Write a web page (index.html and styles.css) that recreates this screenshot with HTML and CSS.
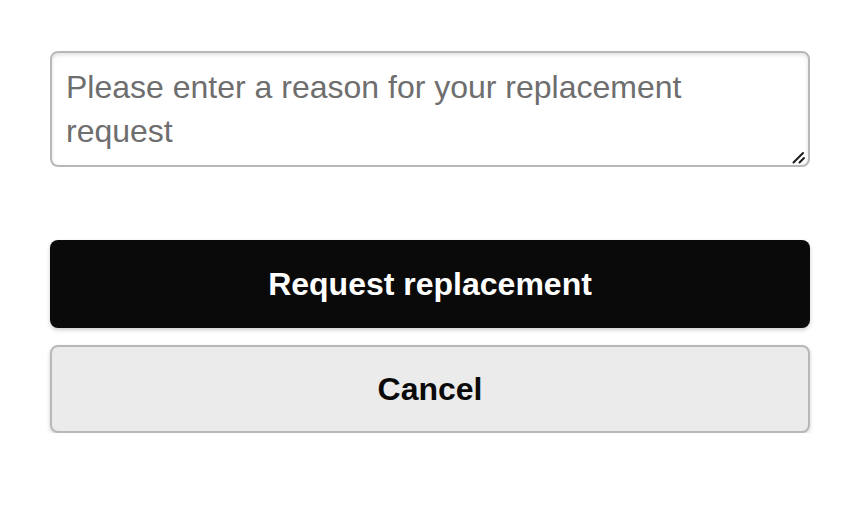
FILE: index.html
```html
<!DOCTYPE html>
<html>
<head>
<meta charset="utf-8">
<link rel="stylesheet" href="styles.css">
</head>
<body>
<div class="form">
  <div class="field">
    <textarea class="reason" placeholder="Please enter a reason for your replacement request"></textarea>
    <svg class="grip" width="16" height="14" viewBox="0 0 16 14" aria-hidden="true">
      <path d="M2.5 12.5 L12 3" stroke="#1a1a1a" stroke-width="2" stroke-linecap="round"/>
      <path d="M8.5 12.5 L13 8" stroke="#1a1a1a" stroke-width="2" stroke-linecap="round"/>
    </svg>
  </div>
  <div class="actions">
    <button class="btn btn-primary">Request replacement</button>
    <button class="btn btn-secondary">Cancel</button>
  </div>
</div>
</body>
</html>
```
FILE: styles.css
```css
html, body {
  margin: 0;
  padding: 0;
  background: #ffffff;
}
body {
  font-family: "Liberation Sans", Arial, sans-serif;
}
.form {
  padding: 51px 52px 0 50px;
  display: flex;
  flex-direction: column;
}
.field {
  position: relative;
  width: 760px;
  height: 116px;
}
.reason {
  display: block;
  box-sizing: border-box;
  width: 760px;
  height: 116px;
  margin: 0;
  padding: 12px 14px;
  border: 2px solid #b8b8b8;
  border-radius: 8px;
  box-shadow: inset 0 2px 4px rgba(0,0,0,0.12);
  font-family: "Liberation Sans", Arial, sans-serif;
  font-size: 32px;
  line-height: 44px;
  color: #333;
  resize: none;
  outline: none;
}
.reason::placeholder {
  color: #6e6e6e;
  opacity: 1;
}
.grip {
  position: absolute;
  right: 3px;
  bottom: 3px;
  pointer-events: none;
}
.actions {
  margin-top: 73px;
  display: flex;
  flex-direction: column;
  gap: 17px;
}
.btn {
  box-sizing: border-box;
  width: 760px;
  height: 88px;
  margin: 0;
  border-radius: 8px;
  font-family: "Liberation Sans", Arial, sans-serif;
  font-weight: bold;
  font-size: 32px;
  cursor: pointer;
}
.btn-primary {
  background: #0a0a0a;
  color: #ffffff;
  border: none;
  box-shadow: 0 2px 4px rgba(0,0,0,0.2);
}
.btn-secondary {
  background: #ebebeb;
  color: #0a0a0a;
  border: 2px solid #b8b8b8;
  box-shadow: 0 2px 4px rgba(0,0,0,0.18);
}
```
